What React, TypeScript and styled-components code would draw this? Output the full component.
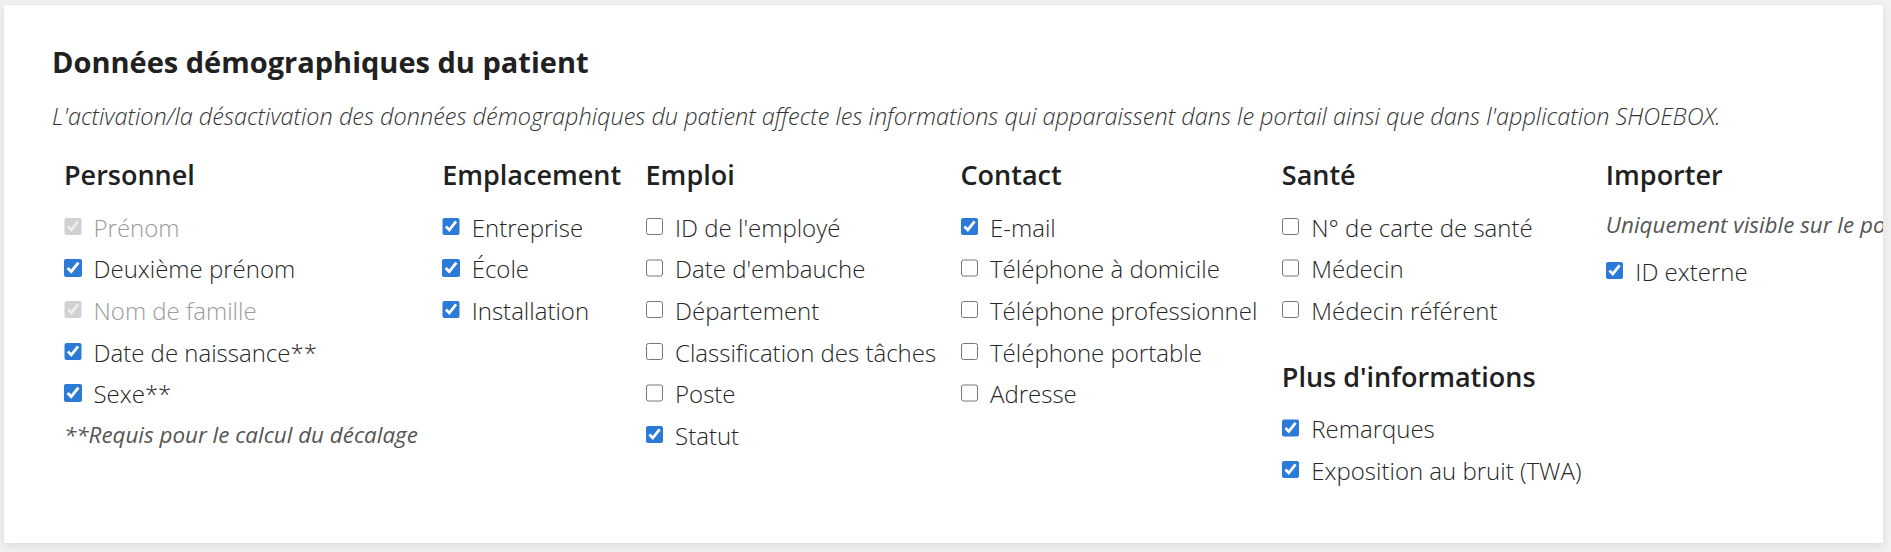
import { useState } from "react"
import styled, { createGlobalStyle } from "styled-components"

const GlobalStyle = createGlobalStyle`
    html, body {
        margin: 0;
        padding: 0;
        background: #f1f1f1;
        font-family: "Open Sans", "Noto Sans", Arial, sans-serif;
        color: #212529;
    }
    * {
        box-sizing: border-box;
    }
`

const Page = styled.div`
    padding: 5px 8px 9px 4px;
`
const Card = styled.section`
    height: 538px;
    padding: 40px 0 0 48px;
    background: #fff;
    box-shadow: 0 3px 9px rgba(0, 0, 0, 0.09);
    overflow: hidden;
`
const Title = styled.h2`
    margin: 0;
    font-size: 29px;
    font-weight: 700;
    line-height: 33.6px;
    color: #212121;
`
const Intro = styled.p`
    margin: 19.5px 0 0;
    font-size: 23.5px;
    font-weight: 300;
    font-style: italic;
    line-height: 36px;
    color: #333;
    white-space: nowrap;
`
const Columns = styled.div`
    display: flex;
    gap: 24.4px;
    margin-top: 24px;
    padding-left: 12px;
`
const Column = styled.div`
    display: flex;
    flex-direction: column;
    flex-shrink: 0;
`
const Heading = styled.h3<{ $spaced?: boolean }>`
    margin: ${p => (p.$spaced ? "27.8px" : "0")} 0 15.3px;
    font-size: 27px;
    font-weight: 600;
    line-height: 33.6px;
    color: #212121;
    white-space: nowrap;
`
const Row = styled.label<{ $disabled?: boolean }>`
    display: flex;
    align-items: center;
    gap: 12px;
    height: 41.67px;
    font-size: 24px;
    font-weight: 300;
    line-height: 1.5;
    color: ${p => (p.$disabled ? "#9a9a9a" : "#262626")};
    white-space: nowrap;
    cursor: ${p => (p.$disabled ? "default" : "pointer")};
`
const Box = styled.input`
    width: 17.5px;
    height: 17.5px;
    margin: 0 0 3px;
    flex-shrink: 0;
    accent-color: #2b7ad8;
`
const Note = styled.p<{ $top?: number; $bottom?: number }>`
    margin: ${p => p.$top ?? 0}px 0 ${p => p.$bottom ?? 0}px;
    font-size: 22.4px;
    font-style: italic;
    line-height: 31.5px;
    color: #555;
    white-space: nowrap;
`

type Item = { label: string; checked: boolean; disabled?: boolean }

function Check({ item }: { item: Item }) {
    const [checked, setChecked] = useState(item.checked)
    return (
        <Row $disabled={item.disabled}>
            <Box
                type="checkbox"
                checked={checked}
                disabled={item.disabled}
                onChange={e => setChecked(e.target.checked)}
            />
            {item.label}
        </Row>
    )
}

const personnel: Item[] = [
    { label: "Prénom", checked: true, disabled: true },
    { label: "Deuxième prénom", checked: true },
    { label: "Nom de famille", checked: true, disabled: true },
    { label: "Date de naissance**", checked: true },
    { label: "Sexe**", checked: true },
]
const emplacement: Item[] = [
    { label: "Entreprise", checked: true },
    { label: "École", checked: true },
    { label: "Installation", checked: true },
]
const emploi: Item[] = [
    { label: "ID de l'employé", checked: false },
    { label: "Date d'embauche", checked: false },
    { label: "Département", checked: false },
    { label: "Classification des tâches", checked: false },
    { label: "Poste", checked: false },
    { label: "Statut", checked: true },
]
const contact: Item[] = [
    { label: "E-mail", checked: true },
    { label: "Téléphone à domicile", checked: false },
    { label: "Téléphone professionnel", checked: false },
    { label: "Téléphone portable", checked: false },
    { label: "Adresse", checked: false },
]
const sante: Item[] = [
    { label: "N° de carte de santé", checked: false },
    { label: "Médecin", checked: false },
    { label: "Médecin référent", checked: false },
]
const plusInfos: Item[] = [
    { label: "Remarques", checked: true },
    { label: "Exposition au bruit (TWA)", checked: true },
]
const importer: Item[] = [{ label: "ID externe", checked: true }]

export default function App() {
    return (
        <Page>
            <GlobalStyle />
            <Card>
                <Title>Données démographiques du patient</Title>
                <Intro>
                    L'activation/la désactivation des données démographiques du patient affecte les informations qui
                    apparaissent dans le portail ainsi que dans l'application SHOEBOX.
                </Intro>
                <Columns>
                    <Column>
                        <Heading>Personnel</Heading>
                        {personnel.map(i => <Check key={i.label} item={i} />)}
                        <Note $top={4}>**Requis pour le calcul du décalage</Note>
                    </Column>
                    <Column>
                        <Heading>Emplacement</Heading>
                        {emplacement.map(i => <Check key={i.label} item={i} />)}
                    </Column>
                    <Column>
                        <Heading>Emploi</Heading>
                        {emploi.map(i => <Check key={i.label} item={i} />)}
                    </Column>
                    <Column>
                        <Heading>Contact</Heading>
                        {contact.map(i => <Check key={i.label} item={i} />)}
                    </Column>
                    <Column>
                        <Heading>Santé</Heading>
                        {sante.map(i => <Check key={i.label} item={i} />)}
                        <Heading $spaced>Plus d'informations</Heading>
                        {plusInfos.map(i => <Check key={i.label} item={i} />)}
                    </Column>
                    <Column>
                        <Heading>Importer</Heading>
                        <Note $top={2.5} $bottom={10}>Uniquement visible sur le portail</Note>
                        {importer.map(i => <Check key={i.label} item={i} />)}
                    </Column>
                </Columns>
            </Card>
        </Page>
    )
}
